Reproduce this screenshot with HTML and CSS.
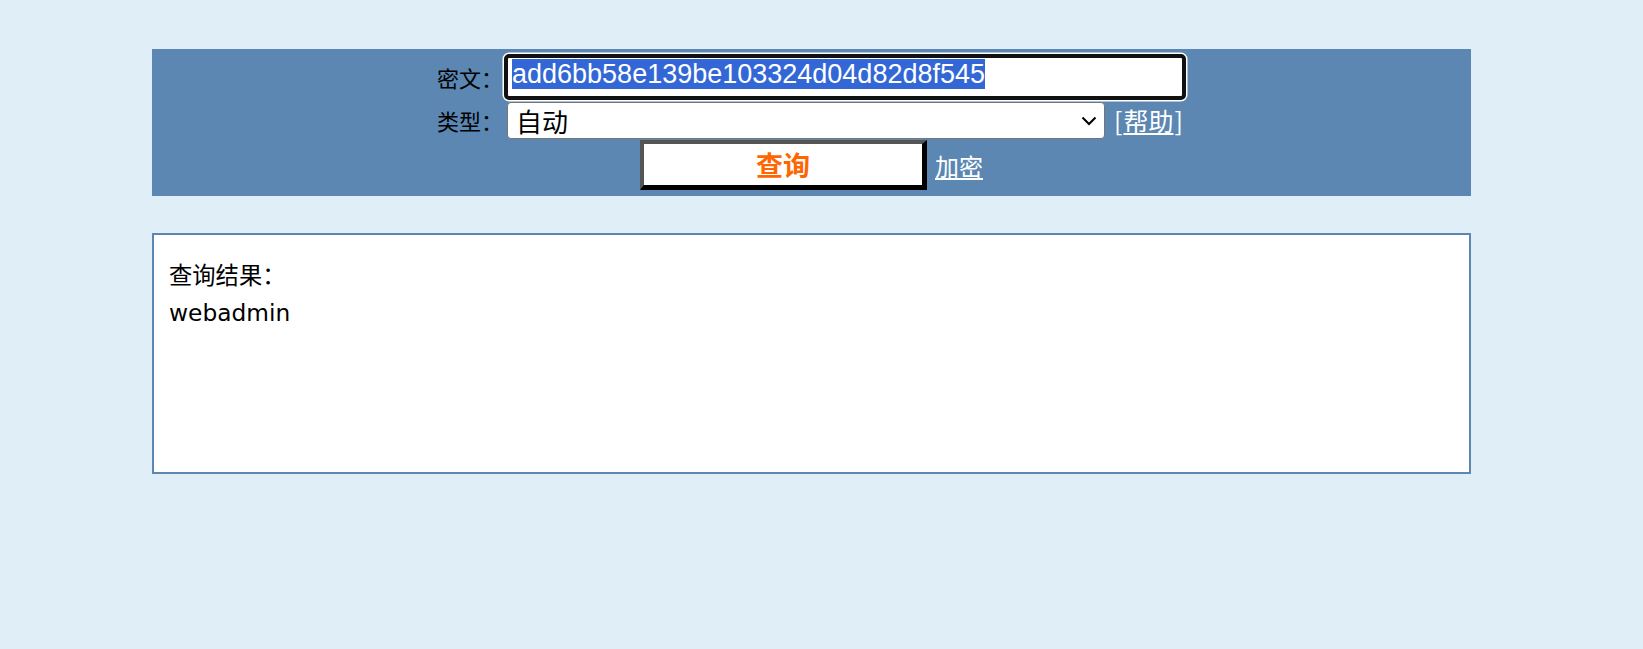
FILE: index.html
```html
<!DOCTYPE html>
<html lang="zh-CN">
<head>
<meta charset="utf-8">
<title>查询</title>
<link rel="stylesheet" href="styles.css">
</head>
<body>
<div class="panel">
  <div class="form">
    <div class="label">密文：</div>
    <div class="field">
      <div class="input"><span class="sel">add6bb58e139be103324d04d82d8f545</span></div>
    </div>
    <div class="label">类型：</div>
    <div class="field row">
      <div class="select">
        <span class="select-text">自动</span>
        <svg class="chev" width="16" height="10" viewBox="0 0 16 10"><path d="M1.5 1.5 L8 8 L14.5 1.5" fill="none" stroke="#000" stroke-width="2"/></svg>
      </div>
      <span class="help"><span class="br">[</span><a href="#">帮助</a><span class="br">]</span></span>
    </div>
    <div class="actions">
      <div class="btn">查询</div>
      <a class="enc" href="#">加密</a>
    </div>
  </div>
</div>
<div class="result">
  <div class="result-title">查询结果：</div>
  <div class="result-value">webadmin</div>
</div>
</body>
</html>
```

FILE: styles.css
```css
html, body {
  margin: 0;
  padding: 0;
  background: #e0eef7;
}
body {
  font-family: "Noto Sans CJK SC", "Liberation Sans", sans-serif;
}
.panel {
  margin: 49px 0 0 152px;
  width: 1319px;
  height: 147px;
  box-sizing: border-box;
  background: #5b87b2;
  padding-top: 5px;
  display: flex;
  justify-content: center;
}
.form {
  display: grid;
  grid-template-columns: 66px 683px;
  grid-template-rows: 46px 39px 51px;
}
.label {
  font-size: 22px;
  color: #000;
  display: flex;
  align-items: center;
  justify-content: flex-end;
  line-height: 1;
  white-space: nowrap;
}
.field {
  display: flex;
  align-items: flex-start;
}
.row {
  padding-top: 2px;
}
.input {
  margin-left: 1px;
  width: 682px;
  height: 46px;
  box-sizing: border-box;
  border: 4px solid #111;
  border-radius: 5px;
  box-shadow: 0 0 0 1.5px #fff;
  background: #fff;
  padding: 1px 0 0 4px;
  font-family: "Liberation Sans", Arial, sans-serif;
  font-size: 27px;
  line-height: 30px;
  white-space: nowrap;
  overflow: hidden;
}
.sel {
  background: #3367d6;
  color: #fff;
}
.select {
  margin-left: 4px;
  width: 598px;
  height: 37px;
  box-sizing: border-box;
  border: 1px solid #767676;
  border-radius: 4px;
  background: #fff;
  display: flex;
  align-items: center;
  justify-content: space-between;
  padding: 0 7px 0 8px;
}
.select-text {
  font-size: 26px;
  line-height: 1;
  color: #000;
}
.chev {
  display: block;
  margin-top: 1px;
}
.help {
  margin-left: 8px;
  font-size: 25px;
  color: #fff;
  line-height: 37px;
  white-space: nowrap;
}
.br {
  margin: 0 1px;
}
.help a, .enc {
  color: #fff;
  text-decoration: underline;
}
.actions {
  grid-column: 1 / 3;
  display: flex;
  align-items: flex-end;
  justify-content: center;
}
.btn {
  width: 287px;
  height: 50px;
  box-sizing: border-box;
  border-style: solid;
  border-width: 4px 5px 5px 4px;
  border-color: #555 #000 #000 #555;
  background: #fff;
  color: #ff6600;
  font-weight: bold;
  font-size: 27px;
  display: flex;
  align-items: center;
  justify-content: center;
  line-height: 1;
}
.enc {
  margin-left: 8px;
  margin-bottom: 12px;
  font-size: 24px;
  line-height: 1;
}
.result {
  margin: 37px 0 0 152px;
  width: 1319px;
  height: 241px;
  box-sizing: border-box;
  border: 2px solid #5b87b2;
  background: #fff;
  padding: 22px 15px;
  font-family: "DejaVu Sans", "Noto Sans CJK SC", sans-serif;
  font-size: 23.3px;
  line-height: 37px;
  color: #000;
}
```
